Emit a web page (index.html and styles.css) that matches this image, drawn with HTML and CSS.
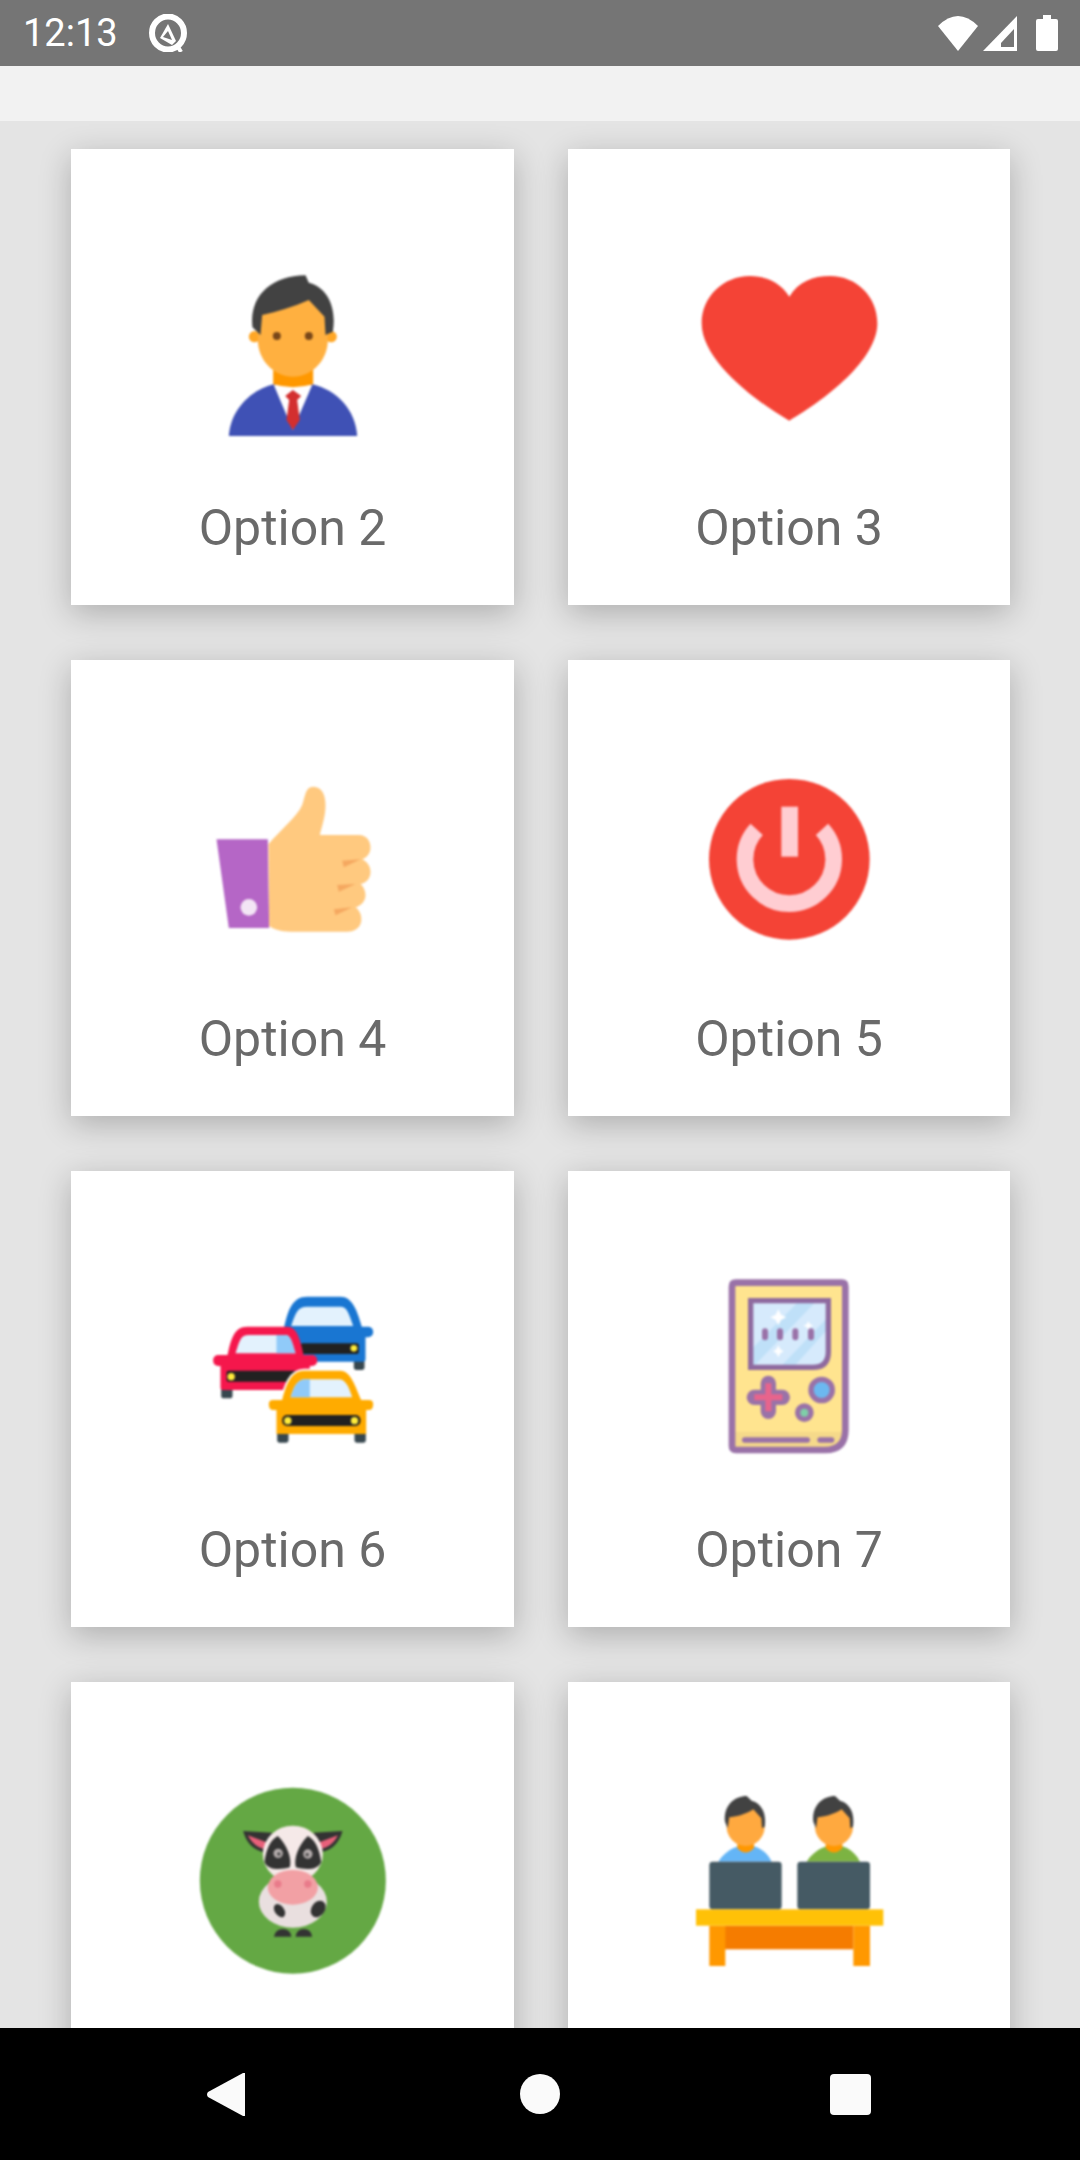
FILE: index.html
```html
<!DOCTYPE html>
<html lang="en">
<head>
<meta charset="utf-8">
<title>Options</title>
<link rel="stylesheet" href="styles.css">
</head>
<body>
<div class="screen">
  <header class="status">
    <span class="time">12:13</span>
    <svg class="q" viewBox="0 0 40 38"><ellipse cx="20" cy="19" rx="16" ry="16.500" fill="none" stroke="#fff" stroke-width="6"/><path d="M20 10 L28 27 L24 31 L12 24 Z" fill="#fff"/><path d="M15 23 L20 17 L24 26 Z" fill="#757575"/><path d="M29 31 L33 38" stroke="#fff" stroke-width="4" fill="none"/></svg>
    <span class="status-right">
      <svg class="wifi" viewBox="0 0 40 35"><path d="M20 35 L0 10 Q20 -10 40 10 Z" fill="#fff"/></svg>
      <svg class="signal" viewBox="0 0 34 35"><path d="M0 35 L34 0 V35 Z" fill="#fff"/><path d="M18 31 H31 V13 L18 27 Z" fill="#757575"/></svg>
      <svg class="battery" viewBox="0 0 22 36"><path d="M7 0 H15 V4 H20 Q22 4 22 6 V34 Q22 36 20 36 H2 Q0 36 0 34 V6 Q0 4 2 4 H7 Z" fill="#fff"/></svg>
    </span>
  </header>
  <div class="appbar"></div>
  <main class="content">
    <div class="grid">
      <article class="card">
        <svg class="icon" viewBox="49.5 6 576 576">
          <path d="M145 558 C150 480 210 420 280 403 H395 C470 420 525 480 530 558 Z" fill="#3f51b5"/>
          <path d="M280 405 H395 L337 540 Z" fill="#fff"/>
          <path d="M337 420 L362 438 L350 450 L358 510 L337 540 L318 510 L326 450 L314 438 Z" fill="#d32f2f"/>
          <path d="M278 350 H398 V403 Q337 420 278 403 Z" fill="#ff9800"/>
          <circle cx="222" cy="260" r="17" fill="#ffa726"/><circle cx="452" cy="260" r="17" fill="#ffa726"/>
          <path d="M232 270 V170 Q337 90 442 170 V270 C442 330 395 380 337 380 C280 380 232 330 232 270 Z" fill="#ffb040"/>
          <path d="M240 255 L216 232 C205 140 270 78 375 76 L385 98 C435 110 470 165 457 245 L435 255 L432 200 L385 150 C340 170 290 185 245 195 Z" fill="#424242"/>
          <circle cx="289" cy="258" r="12" fill="#784719"/><circle cx="385" cy="258" r="12" fill="#784719"/>
        </svg>
        <p class="label">Option 2</p>
      </article>
      <article class="card">
        <svg class="icon" viewBox="69 6 576 576">
          <path d="M358 140 C330 95 285 78 240 78 C160 78 95 140 95 220 C95 330 250 450 358 512 C465 450 622 330 622 220 C622 140 560 78 480 78 C430 78 385 95 358 140 Z" fill="#f44336"/>
        </svg>
        <p class="label">Option 3</p>
      </article>
      <article class="card">
        <svg class="icon" viewBox="19.5 -21 576 576">
          <path d="M78 208 H232 L236 474 H115 Z" fill="#b566c6"/>
          <circle cx="175" cy="412" r="25" fill="#f3e5f5"/>
          <path d="M234 222 C270 180 320 140 335 105 C345 75 345 50 368 50 C395 50 405 75 405 105 C405 140 395 165 388 195 H505 C530 195 540 215 540 232 C540 250 530 262 515 268 C530 275 540 290 540 305 C540 325 528 338 510 342 C520 350 525 365 525 375 C525 395 510 408 495 412 C508 420 515 440 512 455 C508 475 490 485 470 485 H300 C270 485 250 478 236 468 Z" fill="#ffc97f"/>
          <path d="M455 272 L510 268 L460 292 Z M440 345 L495 342 L445 365 Z M430 418 L485 412 L435 436 Z" fill="#f5a860"/>
        </svg>
        <p class="label">Option 4</p>
      </article>
      <article class="card">
        <svg class="icon" viewBox="9 -21 576 576">
          <circle cx="298" cy="268" r="241" fill="#f44336"/>
          <path d="M200 178 A133 133 0 1 0 396 178" fill="none" stroke="#ffcdd2" stroke-width="50"/>
          <rect x="274" y="110" width="50" height="150" fill="#ffcdd2"/>
        </svg>
        <p class="label">Option 5</p>
      </article>
      <article class="card">
        <svg class="icon" viewBox="-10.5 -18 576 576">
          <rect x="460" y="235" width="32" height="35" rx="8" fill="#37474f"/>
          <path d="M250 145 C262 90 275 50 320 50 H420 C455 50 470 90 485 145 Z" fill="#1976d2"/>
          <rect x="240" y="140" width="278" height="32" rx="15" fill="#1976d2"/>
          <rect x="255" y="160" width="240" height="85" rx="8" fill="#1976d2"/>
          <path d="M272 138 C285 100 290 80 320 80 H420 C440 80 445 100 458 138 Z" fill="#e3f2fd"/>
          <rect x="300" y="190" width="175" height="32" rx="6" fill="#212121"/>
          <circle cx="460" cy="205" r="10" fill="#ffeb3b"/>
          <rect x="62" y="320" width="34" height="35" rx="8" fill="#37474f"/>
          <path d="M80 230 C90 180 100 140 140 140 H260 C290 140 300 180 310 230 Z" fill="#f5174c"/>
          <rect x="38" y="225" width="312" height="33" rx="15" fill="#f5174c"/>
          <rect x="60" y="250" width="268" height="80" rx="8" fill="#f5174c"/>
          <path d="M105 220 C118 180 120 165 145 165 H255 C270 165 275 185 285 220 Z" fill="#e3f2fd"/>
          <path d="M228 165 H255 C270 165 275 185 285 220 H228 Z" fill="#90caf9"/>
          <rect x="78" y="272" width="212" height="33" rx="6" fill="#212121"/>
          <circle cx="92" cy="290" r="11" fill="#ffeb3b"/>
          <path d="M245 360 C255 320 270 272 310 272 H420 C450 272 465 320 482 360 H505 Q518 360 518 372 Q518 390 505 390 H497 V462 H228 V390 H218 Q205 390 205 372 Q205 360 218 360 Z" fill="#fff" stroke="#fff" stroke-width="12"/>
          <rect x="230" y="455" width="34" height="33" rx="8" fill="#37474f"/>
          <rect x="462" y="455" width="34" height="33" rx="8" fill="#37474f"/>
          <path d="M245 360 C255 320 270 272 310 272 H420 C450 272 465 320 482 360 H505 Q518 360 518 372 Q518 390 505 390 H497 V462 H228 V390 H218 Q205 390 205 372 Q205 360 218 360 Z" fill="#ffab00"/>
          <path d="M270 352 C280 320 290 298 315 298 H415 C435 298 445 320 455 352 Z" fill="#e3f2fd"/>
          <path d="M270 352 C280 320 290 298 315 298 H328 V352 Z" fill="#90caf9"/>
          <rect x="245" y="405" width="235" height="33" rx="15" fill="#212121"/>
          <circle cx="262" cy="422" r="11" fill="#ffeb3b"/><circle cx="462" cy="422" r="11" fill="#ffeb3b"/>
        </svg>
        <p class="label">Option 6</p>
      </article>
      <article class="card">
        <svg class="icon" viewBox="-51 12 576 576">
          <path d="M66 50 Q66 38 78 38 H395 Q406 38 406 50 V480 Q406 540 345 540 H78 Q66 540 66 528 Z" fill="#ffe48f"/>
          <path d="M66 485 H406 V480 Q406 540 345 540 H78 Q66 540 66 528 Z" fill="#f5d98a"/>
          <path d="M66 50 Q66 38 78 38 H395 Q406 38 406 50 V480 Q406 540 345 540 H78 Q66 540 66 528 Z" fill="none" stroke="#9a72a8" stroke-width="20"/>
          <path d="M122 92 H355 V245 Q355 292 308 292 H122 Z" fill="#d6eafc"/>
          <path d="M122 240 L268 92 H320 L135 285 H122 Z M210 292 L355 140 V175 L250 292 Z" fill="#bfe0f8"/>
          <path d="M122 92 H355 V245 Q355 292 308 292 H122 Z" fill="none" stroke="#8f6a9f" stroke-width="16"/>
          <path d="M205 118 L213 134 L229 142 L213 150 L205 166 L197 150 L181 142 L197 134 Z M295 153 L300 163 L310 167 L300 171 L295 181 L290 171 L280 167 L290 163 Z M205 226 L211 238 L221 244 L211 250 L205 262 L199 250 L189 244 L199 238 Z" fill="#fff"/>
          <path d="M165 184 V202 M210 184 V202 M256 184 V202 M303 184 V202" stroke="#9a72a8" stroke-width="18" stroke-linecap="round" fill="none"/>
          <path d="M175 340 V424 M133 382 H217" stroke="#9a72a8" stroke-width="46" stroke-linecap="round" fill="none"/>
          <path d="M175 340 V424 M133 382 H217" stroke="#e8648c" stroke-width="18" fill="none"/>
          <circle cx="335" cy="360" r="32" fill="#6cb8f0" stroke="#9a72a8" stroke-width="16"/>
          <circle cx="283" cy="428" r="20" fill="#7fcfa8" stroke="#9a72a8" stroke-width="16"/>
          <path d="M104 510 H292 M330 510 H365" stroke="#9a72a8" stroke-width="16" stroke-linecap="round" fill="none"/>
        </svg>
        <p class="label">Option 7</p>
      </article>
      <article class="card">
        <svg class="icon" viewBox="19.5 15 576 576">
          <circle cx="307" cy="302" r="279" fill="#64a844"/>
          <path d="M158 153 L245 158 L240 218 C195 218 168 192 158 153 Z M456 153 L369 158 L374 218 C419 218 446 192 456 153 Z" fill="#333"/>
          <path d="M172 166 L236 190 L232 208 C205 206 184 192 172 166 Z M442 166 L378 190 L382 208 C409 206 430 192 442 166 Z" fill="#e8607a"/>
          <ellipse cx="307" cy="365" rx="102" ry="78" fill="#e9dfdf"/>
          <ellipse cx="307" cy="222" rx="90" ry="85" fill="#f5e9e8"/>
          <path d="M262 168 C240 180 228 205 222 245 C228 268 265 272 298 262 C305 235 290 195 262 168 Z M352 168 C374 180 386 205 392 245 C386 268 349 272 316 262 C309 235 324 195 352 168 Z" fill="#333"/>
          <circle cx="263" cy="220" r="14" fill="#b5adad"/><circle cx="352" cy="222" r="14" fill="#b5adad"/>
          <circle cx="265" cy="222" r="5" fill="#444"/><circle cx="350" cy="224" r="5" fill="#444"/>
          <ellipse cx="307" cy="322" rx="75" ry="52" fill="#f2a0a4"/>
          <circle cx="262" cy="312" r="11" fill="#e97b8a"/><circle cx="352" cy="312" r="11" fill="#e97b8a"/>
          <ellipse cx="267" cy="392" rx="14" ry="22" transform="rotate(-35 267 392)" fill="#333"/>
          <ellipse cx="383" cy="387" rx="20" ry="27" transform="rotate(35 383 387)" fill="#333"/>
          <path d="M250 470 Q255 447 277 447 Q300 447 303 470 Z M315 470 Q318 447 340 447 Q362 447 365 470 Z" fill="#333"/>
        </svg>
      </article>
      <article class="card">
        <svg class="icon" viewBox="9 15 576 576">
          <path d="M85 245 C110 205 150 195 167 195 C190 195 225 205 245 245 Z" fill="#64b5f6"/>
          <path d="M142 170 H192 V205 Q167 230 142 205 Z" fill="#ff9800"/>
          <ellipse cx="167" cy="140" rx="57" ry="58" fill="#ffa93f"/>
          <path d="M113 145 L105 125 C100 75 135 48 170 48 L185 62 C215 70 230 100 224 140 L216 145 L214 115 L190 88 C165 105 135 110 118 112 Z" fill="#424242"/>
          <path d="M350 245 C375 205 415 195 432 195 C455 195 490 205 510 245 Z" fill="#7cb342"/>
          <path d="M407 170 H457 V205 Q432 230 407 205 Z" fill="#ff9800"/>
          <ellipse cx="432" cy="140" rx="57" ry="58" fill="#ffa93f"/>
          <path d="M378 145 L370 125 C365 75 400 48 435 48 L450 62 C480 70 495 100 489 140 L481 145 L479 115 L455 88 C430 105 400 110 383 112 Z" fill="#424242"/>
          <rect x="58" y="245" width="217" height="143" rx="10" fill="#455a64"/>
          <rect x="322" y="245" width="218" height="143" rx="10" fill="#455a64"/>
          <rect x="105" y="437" width="385" height="71" fill="#f57c00"/>
          <rect x="58" y="437" width="48" height="121" fill="#ff9800"/>
          <rect x="490" y="437" width="50" height="121" fill="#ff9800"/>
          <rect x="18" y="388" width="562" height="49" fill="#ffc107"/>
        </svg>
      </article>
    </div>
  </main>
  <nav class="navbar">
    <svg class="nav-back" viewBox="0 0 38 45"><path d="M38 1 V44 L36 44 L1 25 Q-1 22.500 1 20 L36 1 Z" fill="#fafafa"/></svg>
    <span class="nav-home"></span>
    <span class="nav-recent"></span>
  </nav>
</div>
</body>
</html>
```

FILE: styles.css
```css
* { box-sizing: border-box; }
html, body { margin: 0; padding: 0; }
body { font-family: Roboto, "Liberation Sans", sans-serif; background: #e4e4e4; }
.screen { width: 1080px; height: 2160px; display: flex; flex-direction: column; overflow: hidden; }

.status { height: 66px; flex: none; background: #757575; display: flex; align-items: center; padding: 0 22px 0 23px; }
.time { color: #fff; font-size: 38px; line-height: 66px; width: 95px; flex: none; white-space: nowrap; }
.q { width: 40px; height: 38px; margin-left: 30px; flex: none; }
.status-right { margin-left: auto; display: flex; align-items: center; }
.wifi { width: 40px; height: 35px; }
.signal { width: 34px; height: 35px; margin-left: 5px; }
.battery { width: 22px; height: 36px; margin-left: 19px; }

.appbar { height: 55px; flex: none; background: #f2f2f2; }

.content { flex: 1; min-height: 0; overflow: hidden; background: #e4e4e4; padding: 28px 70px 0 71px; }
.grid { display: grid; grid-template-columns: 443px 442px; column-gap: 54px; row-gap: 55px; }
.card { height: 456px; background: #fff; box-shadow: 0 8px 30px rgba(0, 0, 0, .24); display: flex; flex-direction: column; align-items: center; padding-top: 103px; }
.icon { width: 192px; height: 192px; flex: none; filter: blur(.9px); }
.label { margin: 56px 0 0; font-size: 50px; line-height: 56px; color: #6a6a6a; text-align: center; filter: blur(.4px); }

.navbar { height: 132px; flex: none; background: #000; display: flex; align-items: center; padding-left: 207px; }
.nav-back { width: 38px; height: 45px; flex: none; }
.nav-home { width: 40px; height: 40px; flex: none; border-radius: 50%; background: #fafafa; margin-left: 275px; }
.nav-recent { width: 41px; height: 41px; flex: none; border-radius: 4px; background: #fafafa; margin-left: 270px; }
```
